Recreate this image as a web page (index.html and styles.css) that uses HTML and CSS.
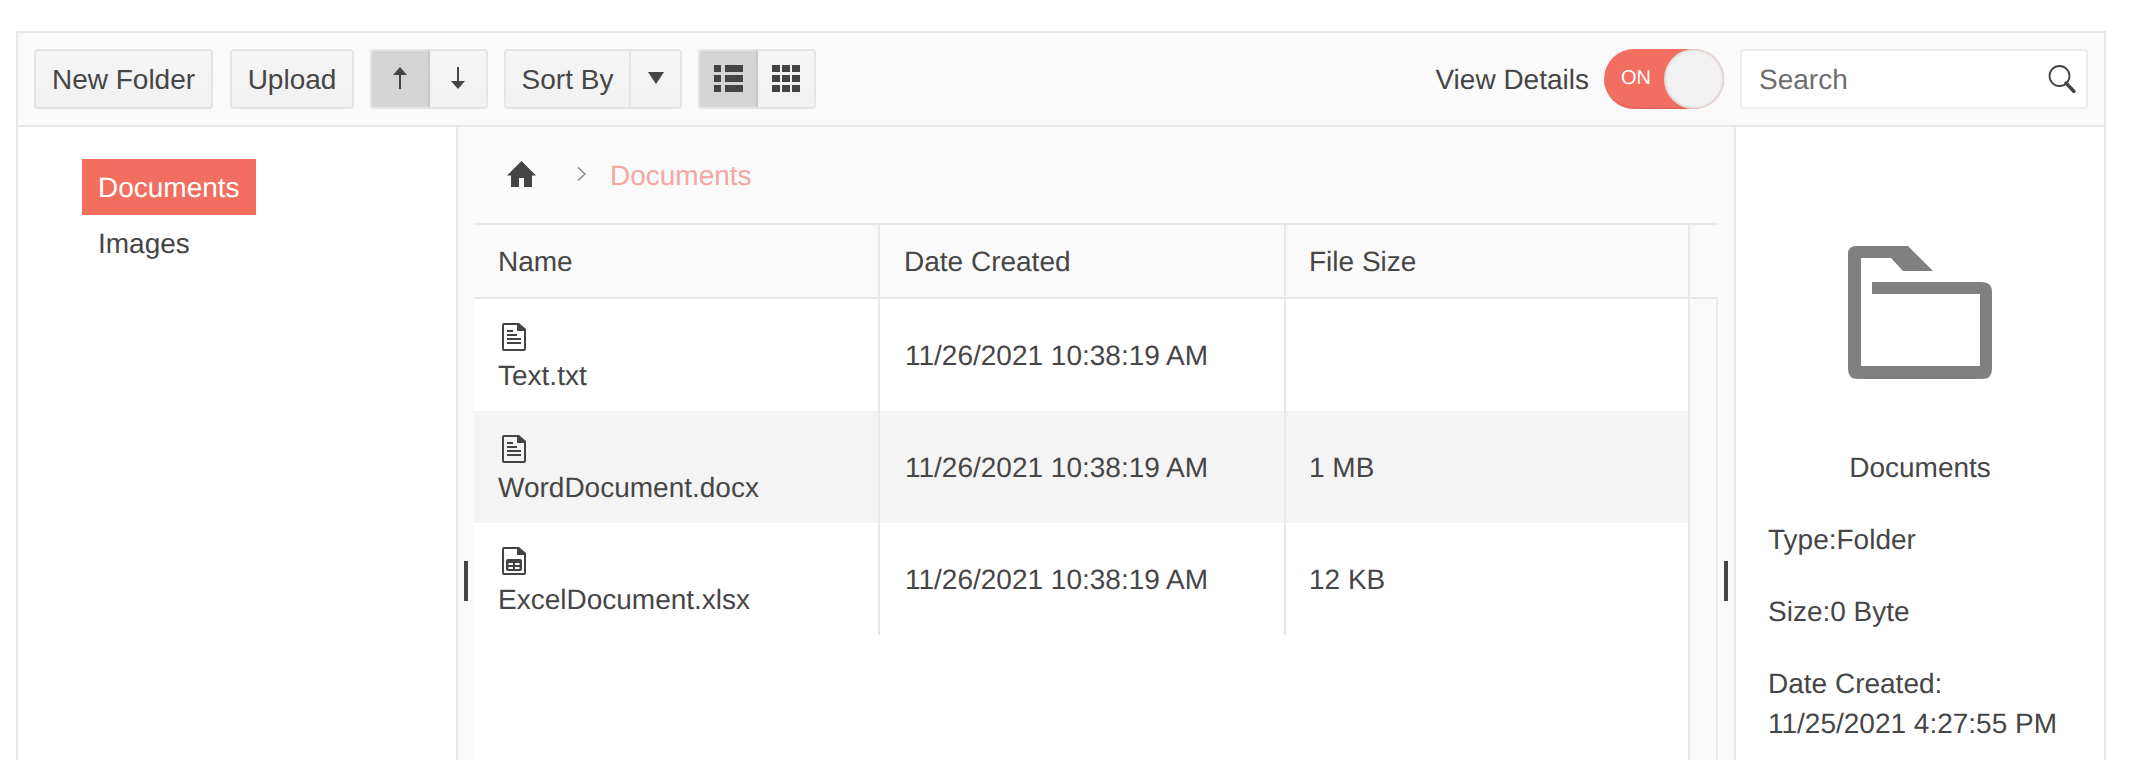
FILE: index.html
```html
<!DOCTYPE html>
<html lang="en">
<head>
<meta charset="utf-8">
<title>File Manager</title>
<link rel="stylesheet" href="styles.css">
</head>
<body>
<div class="manager">
  <header class="toolbar">
    <button class="btn w-new">New Folder</button>
    <button class="btn w-upload">Upload</button>
    <div class="group w-sort">
      <button class="seg seg-a active">
        <svg width="14" height="22" viewBox="0 0 14 22"><path class="ic" d="M7 0L14 8H8V22H6V8H0Z"/></svg>
      </button>
      <button class="seg seg-b">
        <svg width="14" height="22" viewBox="0 0 14 22"><path class="ic" d="M6 0H8V14H14L7 22L0 14H6Z"/></svg>
      </button>
    </div>
    <div class="group w-sortby">
      <button class="seg seg-label">Sort By</button>
      <button class="seg seg-caret">
        <svg width="16" height="12" viewBox="0 0 16 12"><path class="ic" d="M0 0H16L8 12Z"/></svg>
      </button>
    </div>
    <div class="group w-view">
      <button class="seg seg-v active">
        <svg width="29" height="27" viewBox="0 0 29 27"><path class="ic" d="M0 0H7V7H0ZM11 0H29V7H11ZM0 10H7V17H0ZM11 10H29V17H11ZM0 20H7V27H0ZM11 20H29V27H11Z"/></svg>
      </button>
      <button class="seg seg-g">
        <svg width="28" height="27" viewBox="0 0 28 27"><path class="ic" d="M0 0H8V7H0ZM10 0H18V7H10ZM20 0H28V7H20ZM0 10H8V17H0ZM10 10H18V17H10ZM20 10H28V17H20ZM0 20H8V27H0ZM10 20H18V27H10ZM20 20H28V27H20Z"/></svg>
      </button>
    </div>
    <div class="spacer"></div>
    <span class="view-label">View Details</span>
    <div class="toggle"><span class="toggle-on">ON</span><span class="knob"></span></div>
    <div class="search">
      <span class="search-text">Search</span>
      <svg width="28" height="28" viewBox="0 0 28 28"><circle cx="11.5" cy="11" r="10" fill="none" stroke="#444" stroke-width="1.8"/><path d="M18 18L26 26.500" stroke="#444" stroke-width="3.400" stroke-linecap="round"/></svg>
    </div>
  </header>
  <div class="panes">
    <nav class="tree">
      <div class="tree-item selected">Documents</div>
      <div class="tree-item">Images</div>
    </nav>
    <main class="center">
      <span class="splitter splitter-left"></span>
      <span class="splitter splitter-right"></span>
      <div class="crumbs">
        <svg width="29" height="26" viewBox="0 0 29 26"><path class="ic" d="M14.500 0L29 14.500H25V26H17V17H12V26H4V14.500H0Z"/></svg>
        <svg class="chev" width="9" height="14" viewBox="0 0 9 14"><path d="M1 0.500L8 7L1 13.500" fill="none" stroke="#888" stroke-width="1.500"/></svg>
        <span class="crumb-text">Documents</span>
      </div>
      <div class="grid-head">
        <div class="hcell c1">Name</div>
        <div class="hcell c2">Date Created</div>
        <div class="hcell c3">File Size</div>
        <div class="hgutter"></div>
      </div>
      <div class="grid-body">
        <div class="rows">
          <div class="row">
            <div class="cell c1 name">
              <svg class="file" width="24" height="28" viewBox="0 0 24 28"><use href="#doc"/><path class="ic" d="M5 11H15V13H5ZM5 15H19V17H5ZM5 19H19V21H5ZM5 7H11V9H5Z"/></svg>
              <span>Text.txt</span>
            </div>
            <div class="cell c2">11/26/2021 10:38:19 AM</div>
            <div class="cell c3"></div>
          </div>
          <div class="row alt">
            <div class="cell c1 name">
              <svg class="file" width="24" height="28" viewBox="0 0 24 28"><use href="#doc"/><path class="ic" d="M5 11H15V13H5ZM5 15H19V17H5ZM5 19H19V21H5ZM5 7H11V9H5Z"/></svg>
              <span>WordDocument.docx</span>
            </div>
            <div class="cell c2">11/26/2021 10:38:19 AM</div>
            <div class="cell c3">1 MB</div>
          </div>
          <div class="row">
            <div class="cell c1 name">
              <svg class="file" width="24" height="28" viewBox="0 0 24 28"><use href="#doc"/><path class="ic" fill-rule="evenodd" d="M6 12H18Q20 12 20 14V22Q20 24 18 24H6Q4 24 4 22V14Q4 12 6 12ZM6.500 16V18H11V16ZM13 16V18H17.500V16ZM6.500 20V22H11V20ZM13 20V22H17.500V20Z"/></svg>
              <span>ExcelDocument.xlsx</span>
            </div>
            <div class="cell c2">11/26/2021 10:38:19 AM</div>
            <div class="cell c3">12 KB</div>
          </div>
        </div>
        <div class="body-gutter"></div>
      </div>
    </main>
    <aside class="details">
      <svg class="folder" width="144" height="133" viewBox="0 0 144 133"><path d="M8 0H60L85 25H55L43 12H13V120H132V48H24V36H134Q144 36 144 46V123Q144 133 134 133H10Q0 133 0 123V8Q0 0 8 0Z"/></svg>
      <div class="d-name">Documents</div>
      <div class="d-line">Type:Folder</div>
      <div class="d-line">Size:0 Byte</div>
      <div class="d-line">Date Created:<br>11/25/2021 4:27:55 PM</div>
    </aside>
  </div>
</div>
<svg class="defs" width="0" height="0"><defs><path id="doc" fill="#444" fill-rule="evenodd" d="M2 0H17L24 6V26Q24 28 22 28H2Q0 28 0 26V2Q0 0 2 0ZM2 2V26H22V8H15V2Z"/></defs></svg>
</body>
</html>
```
FILE: styles.css
```css
* { box-sizing: border-box; }
html, body { margin: 0; height: 760px; overflow: hidden; background: #fff; }
body {
  font-family: "Liberation Sans", Arial, sans-serif;
  font-size: 28px;
  line-height: 40px;
  color: #464646;
  text-rendering: geometricPrecision;
}
button { font: inherit; color: inherit; padding: 0; margin: 0; cursor: pointer; }
.ic { fill: #444; }
.defs { position: absolute; }

.manager {
  width: 2090px;
  height: 729px;
  margin: 31px 0 0 16px;
  border: 2px solid #e8e8e8;
  border-bottom: 0;
  display: flex;
  flex-direction: column;
}

.toolbar {
  height: 94px;
  flex: none;
  display: flex;
  align-items: center;
  padding: 0 16px;
  background: #fafafa;
  border-bottom: 2px solid #e8e8e8;
}
.btn, .group {
  height: 60px;
  border: 2px solid #e4e4e4;
  border-radius: 4px;
  background: linear-gradient(#f5f5f5, #f1f1f1);
}
.btn { text-align: center; padding-top: 2px; }
.w-new { width: 179px; margin-right: 17px; }
.w-upload { width: 124px; margin-right: 16px; }
.w-sort { width: 118px; margin-right: 16px; }
.w-sortby { width: 178px; margin-right: 16px; }
.w-view { width: 118px; }
.group { display: flex; overflow: hidden; }
.seg {
  display: flex;
  align-items: center;
  justify-content: center;
  height: 100%;
  background: transparent;
  border: 0;
}
.seg svg { display: block; }
.seg-a, .seg-v { width: 58px; }
.seg-b, .seg-g { flex: 1; }
.seg-label { width: 125px; padding-top: 2px; border-right: 2px solid #e4e4e4; }
.seg-caret { flex: 1; }
.seg.active { background: #d4d4d4; border-right: 2px solid #c6c6c6; }
.w-sort .seg svg { margin-top: -2px; }
.w-sortby .seg-caret svg { margin-top: -2px; }
.w-view .seg svg { margin-top: -2px; }

.spacer { flex: 1; }
.view-label { margin: 2px 15px 0 0; }
.toggle {
  width: 120px;
  height: 60px;
  border-radius: 30px;
  background: #f26e60;
  border-bottom: 2px solid #e0675a;
  display: flex;
  align-items: center;
  justify-content: space-between;
  margin-right: 16px;
  position: relative;
}
.toggle-on { font-size: 20px; color: #fff; margin-left: 17px; }
.knob {
  position: absolute;
  right: 0;
  top: 0;
  width: 60px;
  height: 60px;
  border-radius: 50%;
  background: #f1f1f1;
  border: 2px solid #e2dcda;
}
.search {
  width: 348px;
  height: 60px;
  background: #fff;
  border: 2px solid #ececec;
  border-radius: 4px;
  display: flex;
  align-items: center;
  justify-content: space-between;
  padding: 0 10px 0 17px;
  color: #6e6e6e;
}
.search-text { margin-top: 2px; }
.search svg { margin-top: -1px; }

.panes { flex: 1; display: flex; min-height: 0; }
.tree {
  width: 440px;
  flex: none;
  padding: 32px 0 0 64px;
  background: #fff;
  border-right: 2px solid #e8e8e8;
}
.tree-item {
  width: max-content;
  height: 56px;
  line-height: 58px;
  padding: 0 16px;
}
.tree-item.selected { background: #f26e60; color: #fff; }

.center {
  width: 1278px;
  flex: none;
  position: relative;
  padding: 0 16px;
  background: #fafafa;
  border-right: 2px solid #e8e8e8;
  display: flex;
  flex-direction: column;
}
.splitter {
  position: absolute;
  width: 4px;
  height: 40px;
  top: 434px;
  background: #444;
}
.splitter-left { left: 6px; }
.splitter-right { right: 6px; }

.crumbs {
  height: 96px;
  flex: none;
  display: flex;
  align-items: center;
  padding: 0 0 0 33px;
}
.crumbs svg { display: block; flex: none; margin-top: -2px; }
.crumbs .chev { margin-left: 41px; }
.crumb-text { margin: 2px 0 0 24px; color: #f4a7a0; }

.grid-head {
  height: 76px;
  flex: none;
  display: flex;
  border-top: 2px solid #e8e8e8;
  border-bottom: 2px solid #e8e8e8;
}
.hcell { display: flex; align-items: center; padding: 2px 0 0 24px; }
.c1 { width: 406px; flex: none; border-right: 2px solid #e8e8e8; }
.c2 { width: 406px; flex: none; border-right: 2px solid #e8e8e8; }
.c3 { width: 402px; flex: none; }
.hcell.c3 { width: 404px; padding-left: 23px; border-right: 2px solid #e8e8e8; }
.hgutter { flex: 1; }

.grid-body { flex: 1; display: flex; min-height: 0; }
.rows { width: 1214px; flex: none; background: #fff; }
.row { height: 112px; display: flex; }
.row.alt { background: #f4f4f4; }
.cell { display: flex; align-items: center; padding: 2px 0 0 25px; }
.cell.c3 { padding-left: 23px; }
.cell.name {
  flex-direction: column;
  align-items: flex-start;
  justify-content: flex-start;
  padding: 24px 0 0 24px;
}
.file { display: block; margin: 0 0 5px 4px; flex: none; }
.body-gutter {
  flex: 1;
  border-left: 2px solid #e8e8e8;
  border-right: 2px solid #ececec;
}

.details {
  flex: 1;
  background: #fff;
  padding: 119px 32px 0;
}
.folder { display: block; margin: 0 auto; }
.folder path { fill: #808080; }
.d-name { text-align: center; margin: 69px 0 32px; }
.d-line { margin-bottom: 32px; white-space: nowrap; }
```
